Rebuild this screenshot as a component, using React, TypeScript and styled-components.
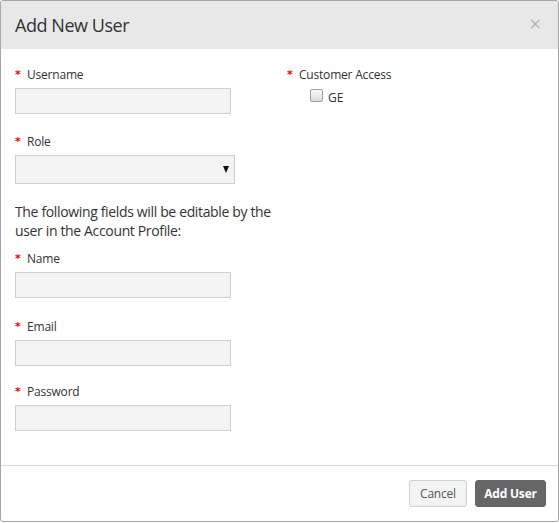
import React from "react";
import styled, { createGlobalStyle } from "styled-components";

const Global = createGlobalStyle`
  html, body { margin: 0; padding: 0; background: #fff; }
  body { font-family: "Open Sans", "Liberation Sans", sans-serif; color: #333; }
  * { box-sizing: border-box; }
`;

const Modal = styled.div`
  width: 559px;
  height: 522px;
  border: 1px solid #a6a6a6;
  border-radius: 3px;
  display: flex;
  flex-direction: column;
  overflow: hidden;
  background: #fff;
`;

const Header = styled.div`
  height: 48px;
  background: #e8e8e8;
  display: flex;
  align-items: center;
  justify-content: space-between;
  padding: 0 16px 0 14px;
`;

const Title = styled.h1`
  margin: 0;
  font-size: 18px;
  font-weight: 400;
  color: #333;
  letter-spacing: -0.45px;
`;

const Close = styled.button`
  border: 0;
  background: none;
  padding: 0;
  color: #b5b5b5;
  font-size: 16px;
  line-height: 1;
  font-family: "DejaVu Sans", sans-serif;
  cursor: pointer;
  margin-top: -2px;
`;

const Body = styled.div`
  flex: 1;
  display: grid;
  grid-template-columns: 272px 1fr;
  padding: 18px 14px 0 14px;
`;

const Column = styled.div`
  display: flex;
  flex-direction: column;
  align-items: flex-start;
`;

const Group = styled.div<{ $mb?: number }>`
  display: flex;
  flex-direction: column;
  align-items: flex-start;
  margin-bottom: ${(p) => (p.$mb ?? 20)}px;
`;

const Label = styled.label`
  display: flex;
  align-items: center;
  font-size: 12px;
  line-height: 16px;
  height: 16px;
  color: #333;
  letter-spacing: -0.2px;
  margin-bottom: 5px;
`;

const Star = styled.span`
  color: #e00;
  font-size: 11px;
  font-weight: 700;
  width: 12px;
  font-family: "DejaVu Sans", sans-serif;
`;

const Input = styled.input`
  width: 216px;
  height: 26px;
  background: #f3f3f3;
  border: 1px solid #cfcfcf;
  outline: none;
  padding: 0 6px;
  font-family: inherit;
`;

const SelectWrap = styled.div`
  position: relative;
  &::after {
    content: "";
    position: absolute;
    right: 6px;
    top: 11px;
    border-left: 3.5px solid transparent;
    border-right: 3.5px solid transparent;
    border-top: 7px solid #111;
    pointer-events: none;
  }
`;

const Select = styled.select`
  appearance: none;
  width: 220px;
  height: 29px;
  background: #f3f3f3;
  border: 1px solid #cfcfcf;
  border-radius: 0;
  outline: none;
  display: block;
`;

const Note = styled.p`
  margin: -2px 0 11px 0;
  font-size: 14px;
  line-height: 19px;
  color: #333;
  letter-spacing: -0.35px;
  width: 270px;
`;

const CheckRow = styled.label`
  display: flex;
  align-items: flex-start;
  gap: 5px;
  margin-left: 23px;
  font-size: 12px;
  line-height: 16px;
  color: #333;
`;

const Check = styled.input`
  appearance: none;
  margin: 1px 0 0 0;
  width: 13px;
  height: 13px;
  border: 1px solid #a0a0a0;
  border-radius: 2px;
  background: linear-gradient(#fafafa, #dcdcdc);
`;

const CheckText = styled.span`
  margin-top: 2px;
`;

const Footer = styled.div`
  height: 56px;
  border-top: 1px solid #d9d9d9;
  display: flex;
  justify-content: flex-end;
  align-items: flex-start;
  gap: 8px;
  padding: 14px 12px 0 0;
`;

const Button = styled.button<{ $primary?: boolean }>`
  height: 27px;
  width: ${(p) => (p.$primary ? 71 : 58)}px;
  padding: 0;
  border-radius: 3px;
  font-family: inherit;
  font-size: 12px;
  letter-spacing: -0.2px;
  font-weight: ${(p) => (p.$primary ? 700 : 400)};
  color: ${(p) => (p.$primary ? "#fff" : "#555")};
  background: ${(p) => (p.$primary ? "#666" : "#f3f3f3")};
  border: 1px solid ${(p) => (p.$primary ? "#666" : "#d0d0d0")};
  cursor: pointer;
`;

export default function App() {
  return (
    <>
      <Global />
      <Modal>
        <Header>
          <Title>Add New User</Title>
          <Close aria-label="Close">×</Close>
        </Header>
        <Body>
          <Column>
            <Group>
              <Label><Star>*</Star>Username</Label>
              <Input />
            </Group>
            <Group>
              <Label><Star>*</Star>Role</Label>
              <SelectWrap>
                <Select />
              </SelectWrap>
            </Group>
            <Note>The following fields will be editable by the user in the Account Profile:</Note>
            <Group $mb={21}>
              <Label><Star>*</Star>Name</Label>
              <Input />
            </Group>
            <Group $mb={18}>
              <Label><Star>*</Star>Email</Label>
              <Input />
            </Group>
            <Group $mb={0}>
              <Label><Star>*</Star>Password</Label>
              <Input />
            </Group>
          </Column>
          <Column>
            <Label><Star>*</Star>Customer Access</Label>
            <CheckRow>
              <Check type="checkbox" />
              <CheckText>GE</CheckText>
            </CheckRow>
          </Column>
        </Body>
        <Footer>
          <Button>Cancel</Button>
          <Button $primary>Add User</Button>
        </Footer>
      </Modal>
    </>
  );
}
